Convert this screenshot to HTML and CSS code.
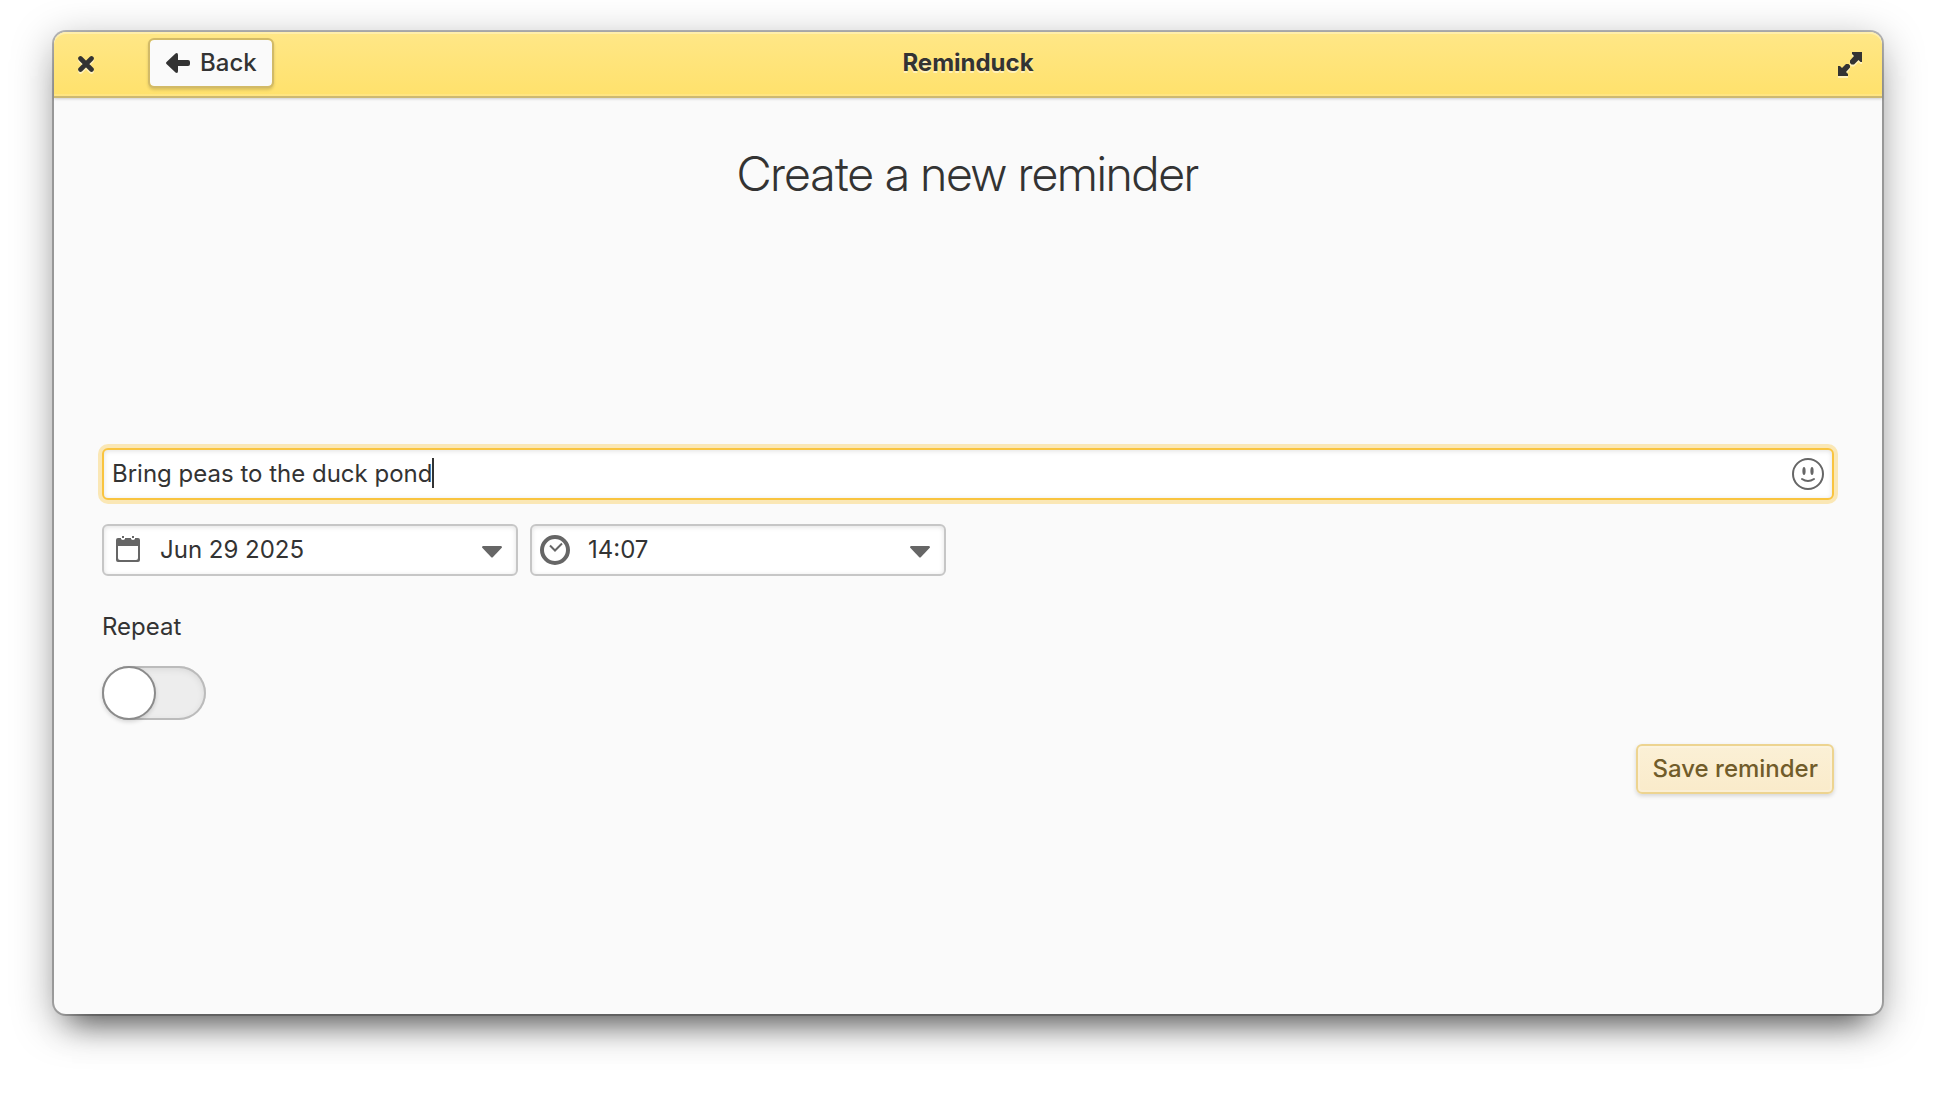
FILE: index.html
```html
<!DOCTYPE html>
<html lang="en">
<head>
<meta charset="utf-8">
<meta name="viewport" content="width=device-width, initial-scale=1">
<title>Reminduck</title>
<link rel="stylesheet" href="styles.css">
</head>
<body>
<main class="window">
  <header class="headerbar">
    <div class="headerbar-start">
      <button class="icon-button" type="button" aria-label="Close">
        <svg width="16" height="16" viewBox="0 0 16 16"><path d="M2.500 2.500 13.500 13.500M13.500 2.500 2.500 13.500" stroke="currentColor" stroke-width="4.600" stroke-linecap="round"/></svg>
      </button>
      <button class="button" type="button">
        <svg width="24" height="20" viewBox="0 0 24 20"><path d="M.5 9 9.500.4Q12 -.8 12 2V7H22Q24 7 24 9V11Q24 13 22 13H12V18Q12 20.800 9.500 19.600L.5 11Q-.4 10 .5 9Z" fill="currentColor"/></svg>
        Back
      </button>
    </div>
    <h1 class="title">Reminduck</h1>
    <div class="headerbar-end">
      <button class="icon-button" type="button" aria-label="Maximize">
        <svg width="24" height="24" viewBox="0 0 24 24"><path d="M14 0H24V10H22.500L20.500 8 16 12.500H13.500L12 11V8.500L16 4 14 2ZM0 14H2L4 16 8 12H10.500L12 13.500V15.500L8 20 10 22V24H0Z" fill="currentColor"/></svg>
      </button>
    </div>
  </header>
  <section class="content">
    <h2 class="heading">Create a new reminder</h2>
    <form class="form">
      <div class="entry entry-focused">
        <input class="entry-input" type="text" value="Bring peas to the duck pond" aria-label="Description">
        <span class="caret"></span>
        <button class="entry-button" type="button" aria-label="Insert emoji">
          <svg width="32" height="32" viewBox="0 0 32 32" fill="none"><circle cx="16" cy="16" r="15" stroke="currentColor" stroke-width="2"/><ellipse cx="12" cy="13" rx="1.600" ry="4" fill="currentColor"/><ellipse cx="20" cy="13" rx="1.600" ry="4" fill="currentColor"/><path d="M10 21Q16 25 22 21" stroke="currentColor" stroke-width="2" stroke-linecap="round"/></svg>
        </button>
      </div>
      <div class="pickers">
        <div class="entry">
          <label class="entry-icon" for="date" aria-label="Date">
            <svg width="30" height="30" viewBox="0 0 30 30"><path d="M6 3H9V4Q11 6 13 4V3H19V4Q21 6 23 4V3H26Q28 3 28 5V25Q28 27 26 27H6Q4 27 4 25V5Q4 3 6 3ZM6 11V23Q6 25 8 25H24Q26 25 26 23V11Z" fill="currentColor" fill-rule="evenodd"/><path d="M11 1V3M21 1V3" stroke="currentColor" stroke-width="2"/></svg>
          </label>
          <input class="entry-input" id="date" type="text" value="Jun 29 2025">
          <button class="entry-button" type="button" aria-label="Choose date">
            <svg class="arrow" width="20" height="12" viewBox="0 0 20 12"><path d="M1 0H19Q20 0 20 1.500L11 11Q10 12 9 11L0 1.500Q0 0 1 0Z" fill="currentColor"/></svg>
          </button>
        </div>
        <div class="entry">
          <label class="entry-icon" for="time" aria-label="Time">
            <svg width="30" height="30" viewBox="0 0 30 30" fill="none" stroke="currentColor"><circle cx="15" cy="15" r="13" stroke-width="4"/><path d="M10 10.500 15 15.500 22 8.500" stroke-width="2"/></svg>
          </label>
          <input class="entry-input" id="time" type="text" value="14:07">
          <button class="entry-button" type="button" aria-label="Choose time">
            <svg class="arrow" width="20" height="12" viewBox="0 0 20 12"><path d="M1 0H19Q20 0 20 1.500L11 11Q10 12 9 11L0 1.500Q0 0 1 0Z" fill="currentColor"/></svg>
          </button>
        </div>
      </div>
      <div class="repeat">
        <label for="repeat">Repeat</label>
        <input class="switch" id="repeat" type="checkbox" role="switch">
      </div>
      <button class="button button-suggested" type="submit">Save reminder</button>
    </form>
  </section>
</main>
</body>
</html>
```
FILE: styles.css
```css
*, *::before { box-sizing: border-box; }

body {
  margin: 0;
  min-height: 100vh;
  display: flex;
  padding: 32px 54px 80px;
  background: #fff;
  color: #333;
  font: 24px/30px Inter, sans-serif;
}

svg { display: block; flex: none; }

button, input {
  font: inherit;
  color: inherit;
  margin: 0;
}

button {
  background: none;
  border: 0;
  padding: 0;
}

.window {
  flex: 1;
  display: flex;
  flex-direction: column;
  min-width: 0;
  border-radius: 12px;
  background: #fafafa;
  box-shadow:
    0 0 0 2px rgba(0, 0, 0, 0.25),
    0 26px 28px -18px rgba(0, 0, 0, 0.5),
    0 10px 42px rgba(0, 0, 0, 0.34);
}

.headerbar {
  display: grid;
  grid-template-columns: 1fr auto 1fr;
  align-items: center;
  height: 66px;
  padding: 0 20px 4px;
  border-radius: 12px 12px 0 0;
  background: linear-gradient(#ffe787, #ffe16b);
  box-shadow:
    inset 0 -2px #cdb972,
    inset 0 -4px rgba(255, 255, 255, 0.15),
    inset 0 2px rgba(255, 255, 255, 0.3),
    0 1px 3px rgba(0, 0, 0, 0.18);
}

.headerbar-start {
  display: flex;
  align-items: center;
  gap: 54px;
  padding-left: 4px;
}

.headerbar-end {
  display: flex;
  justify-content: flex-end;
}

.icon-button {
  padding-top: 2px;
}

.icon-button svg { filter: drop-shadow(0 2px rgba(255, 255, 255, 0.5)); }

.title {
  margin: 0;
  font-size: 24px;
  font-weight: 700;
  text-shadow: 0 2px rgba(255, 255, 255, 0.5);
}

.button {
  display: flex;
  align-items: center;
  gap: 10px;
  height: 50px;
  padding: 0 15px 0 16px;
  border: 2px solid #d2ba67;
  border-radius: 6px;
  background: #fafafa;
  background-clip: padding-box;
  box-shadow: 0 2px 3px rgba(0, 0, 0, 0.15);
  font-weight: 500;
}

.content {
  flex: 1;
  display: flex;
  flex-direction: column;
  padding: 46px 48px 0;
}

.heading {
  margin: 0 0 24px;
  font-family: "Inter Display", Inter, sans-serif;
  font-variation-settings: "opsz" 32;
  font-size: 48px;
  line-height: 60px;
  font-weight: 300;
  text-align: center;
}

.form {
  display: flex;
  flex-direction: column;
  gap: 24px;
  margin: auto 0;
}

.entry {
  position: relative;
  display: flex;
  align-items: center;
  height: 52px;
  border: 2px solid #c6c6c6;
  border-radius: 6px;
  padding: 0 14px 0 8px;
  background: #fff;
  box-shadow: inset 0 1px 5px rgba(0, 0, 0, 0.12);
}

.entry-focused {
  border-color: #f9c440;
  padding: 0 8px;
  box-shadow: 0 0 0 4px #fae7b5, inset 0 1px 5px rgba(0, 0, 0, 0.12);
}

.entry-input {
  flex: 1;
  min-width: 0;
  border: 0;
  padding: 0 0 2px;
  height: 32px;
  background: none;
  outline: none;
}

.caret {
  position: absolute;
  left: 328px;
  top: 8px;
  width: 2px;
  height: 30px;
  background: #333;
}

.entry-icon {
  margin-right: 18px;
  color: #666;
}

.entry-button { color: #666; }

.arrow { margin-top: 4px; }

.pickers {
  display: grid;
  grid-template-columns: repeat(2, minmax(0, 416px));
  gap: 12px;
}

.repeat {
  display: flex;
  flex-direction: column;
  align-items: flex-start;
  gap: 24px;
  padding-top: 12px;
}

.switch {
  appearance: none;
  display: flex;
  width: 104px;
  height: 54px;
  border-radius: 27px;
  background: #ededed;
  box-shadow: inset 0 0 0 2px #bbb, inset 0 2px 8px rgba(0, 0, 0, 0.12);
}

.switch::before {
  content: "";
  width: 54px;
  height: 54px;
  border: 2px solid #8b8b8b;
  border-radius: 50%;
  background: #fff;
  box-shadow: 0 2px 4px rgba(0, 0, 0, 0.15);
}

.switch:checked { justify-content: flex-end; }

.button-suggested {
  align-self: flex-end;
  padding: 0 14px;
  border-color: #edd490;
  background: linear-gradient(#fbf0d6, #faebca);
  color: #715c2a;
  box-shadow: inset 0 0 0 2px rgba(255, 255, 255, 0.2), 0 2px 4px rgba(0, 0, 0, 0.15);
}
```
